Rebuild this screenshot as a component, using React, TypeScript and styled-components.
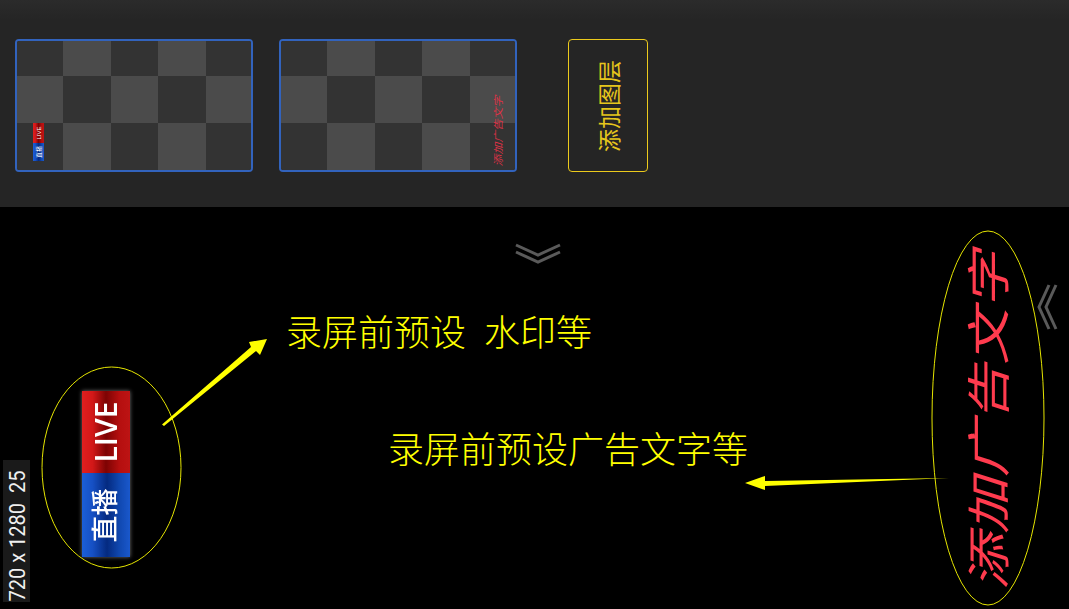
import React from 'react';
import styled, { createGlobalStyle } from 'styled-components';

const CJK = `"Liberation Sans", "Noto Sans CJK SC", sans-serif`;

const GlobalStyle = createGlobalStyle`
    html, body { margin: 0; padding: 0; background: #000; }
    body { font-family: ${CJK}; }
    #root { width: 1069px; height: 609px; overflow: hidden; }
`;

const Page = styled.div`
    width: 1069px;
    height: 609px;
    display: flex;
    flex-direction: column;
    background: #000;
`;

const LayerBar = styled.div`
    height: 207px;
    box-sizing: border-box;
    padding: 39px 0 35px 15px;
    display: flex;
    gap: 26px;
    background: linear-gradient(#2b2b2b, #252525 20px);
`;

const LayerCard = styled.div`
    position: relative;
    width: 238px;
    height: 133px;
    box-sizing: border-box;
    border: 2px solid #3263bd;
    border-radius: 4px;
    overflow: hidden;
    display: grid;
    grid-template-columns: 46px 47.5px 47.5px 47.5px 1fr;
    grid-template-rows: 35px 1fr 1fr;
`;

const CheckerCell = styled.div<{ $light: boolean }>`
    background: ${({ $light }) => ($light ? '#4b4b4b' : '#333333')};
`;

const AddLayerButton = styled.button`
    width: 80px;
    height: 133px;
    margin-left: 25px;
    padding: 0;
    box-sizing: border-box;
    border: 1.5px solid #ecca1c;
    border-radius: 4px;
    background: transparent;
    color: #e6c61c;
    font-family: ${CJK};
    font-size: 23px;
    display: flex;
    align-items: center;
    justify-content: center;
`;

const TurnedLabel = styled.span`
    display: block;
    white-space: pre;
    transform: rotate(-90deg);
`;

const MiniBadge = styled.div`
    position: absolute;
    left: 16px;
    top: 82px;
    width: 11px;
    height: 38px;
    display: flex;
    flex-direction: column;
`;

const BadgePart = styled.div<{ $tone: 'red' | 'blue'; $h: number }>`
    height: ${({ $h }) => $h}px;
    flex: none;
    display: flex;
    align-items: center;
    justify-content: center;
    overflow: hidden;
    color: #fff;
    background: ${({ $tone }) =>
        $tone === 'red'
            ? 'linear-gradient(90deg, #e01f1f 0%, #d21818 22%, #7d0303 50%, #b50f0f 78%, #bd1414 100%)'
            : 'linear-gradient(90deg, #1b5fd8 0%, #1650c4 22%, #042a80 52%, #1048b0 78%, #1a58cc 100%)'};
`;

const MiniBadgeText = styled(TurnedLabel)`
    font-size: 6px;
    line-height: 1;
`;

const MiniAdText = styled.span`
    position: absolute;
    left: 188px;
    top: 84px;
    width: 60px;
    height: 12px;
    line-height: 12px;
    font-size: 10px;
    font-style: italic;
    white-space: nowrap;
    color: #dc3246;
    transform: rotate(-90deg) scaleX(1.18);
`;

const Stage = styled.div`
    position: relative;
    flex: 1;
    background: #000;
    overflow: hidden;
`;

const Annotations = styled.svg`
    position: absolute;
    inset: 0;
    width: 100%;
    height: 100%;
`;

const Note = styled.span<{ $x: number; $y: number }>`
    position: absolute;
    left: ${({ $x }) => $x}px;
    top: ${({ $y }) => $y}px;
    font-size: 36px;
    font-weight: 300;
    line-height: 44px;
    word-spacing: -1px;
    color: #ffff00;
    white-space: pre;
`;

const LiveBadge = styled.div`
    position: absolute;
    left: 82px;
    top: 184px;
    width: 48px;
    display: flex;
    flex-direction: column;
    box-shadow: 0 0 4px rgba(255, 255, 255, 0.45);
    filter: blur(0.5px);
`;

const LiveText = styled(TurnedLabel)`
    font-size: 30px;
    line-height: 1;
    font-weight: 600;
    font-family: "Open Sans", "Noto Sans CJK SC", sans-serif;
`;

const ZhiboText = styled(TurnedLabel)`
    font-size: 27px;
    line-height: 1;
    font-weight: 500;
`;

const StreamInfo = styled.div`
    position: absolute;
    left: 3px;
    top: 253px;
    width: 27px;
    height: 142px;
    box-sizing: border-box;
    padding-top: 9px;
    background: #1a1a1a;
    color: #f0f0f0;
    font-family: "Roboto", sans-serif;
    font-size: 22.5px;
    display: flex;
    align-items: center;
    justify-content: center;
    overflow: hidden;
`;

const StreamInfoText = styled(TurnedLabel)`
    flex: none;
    transform: rotate(-90deg) scaleX(0.89);
`;

const AdText = styled.span`
    position: absolute;
    left: 858px;
    top: 185px;
    width: 264px;
    height: 58px;
    line-height: 58px;
    font-size: 44px;
    font-style: italic;
    white-space: nowrap;
    color: #ff3b4e;
    transform: rotate(-90deg) scaleX(1.28);
`;

const checker = Array.from({ length: 15 }, (_, i) => (Math.floor(i / 5) + (i % 5)) % 2 === 1);

const Checker: React.FC = () => (
    <>
        {checker.map((light, i) => (
            <CheckerCell key={i} $light={light} />
        ))}
    </>
);

const App: React.FC = () => (
    <Page>
        <GlobalStyle />
        <LayerBar>
            <LayerCard>
                <Checker />
                <MiniBadge>
                    <BadgePart $tone="red" $h={20}><MiniBadgeText>LIVE</MiniBadgeText></BadgePart>
                    <BadgePart $tone="blue" $h={18}><MiniBadgeText>直播</MiniBadgeText></BadgePart>
                </MiniBadge>
            </LayerCard>
            <LayerCard>
                <Checker />
                <MiniAdText>添加广告文字</MiniAdText>
            </LayerCard>
            <AddLayerButton>
                <TurnedLabel>添加图层</TurnedLabel>
            </AddLayerButton>
        </LayerBar>
        <Stage>
            <LiveBadge>
                <BadgePart $tone="red" $h={82}><LiveText>LIVE</LiveText></BadgePart>
                <BadgePart $tone="blue" $h={84}><ZhiboText>直播</ZhiboText></BadgePart>
            </LiveBadge>
            <StreamInfo>
                <StreamInfoText>{'720 x 1280  25'}</StreamInfoText>
            </StreamInfo>
            <AdText>添加广告文字</AdText>
            <Note $x={286} $y={105}>{'录屏前预设  水印等'}</Note>
            <Note $x={388} $y={222}>录屏前预设广告文字等</Note>
            <Annotations viewBox="0 207 1069 402">
                <ellipse cx="111.5" cy="467.5" rx="69.5" ry="100.5" fill="none" stroke="#e6e600" strokeWidth="1" />
                <ellipse cx="988" cy="418" rx="56" ry="187" fill="none" stroke="#e6e600" strokeWidth="1" />
                <polygon points="162,424.5 251,347 249,342 267,339 260,355 256,351 164,426" fill="#ffff00" />
                <polygon points="949,478 765,481 765,476 745,483 765,490 765,486" fill="#ffff00" />
                <polyline points="516,245 538,255 560,245" fill="none" stroke="#5a5a5a" strokeWidth="3" />
                <polyline points="516,252 538,262 560,252" fill="none" stroke="#5a5a5a" strokeWidth="3" />
                <polyline points="1049,285 1039,307 1049,329" fill="none" stroke="#5a5a5a" strokeWidth="3" />
                <polyline points="1056,285 1046,307 1056,329" fill="none" stroke="#5a5a5a" strokeWidth="3" />
            </Annotations>
        </Stage>
    </Page>
);

export default App;
